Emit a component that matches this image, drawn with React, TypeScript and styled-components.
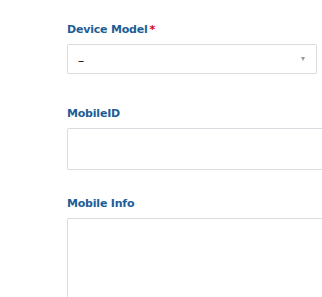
import React from "react";
import styled, { createGlobalStyle } from "styled-components";

const Global = createGlobalStyle`
  html, body { margin: 0; padding: 0; background: #fff; }
  body { font-family: "Open Sans", "DejaVu Sans", sans-serif; overflow: hidden; }
`;

const Form = styled.div`
  display: flex;
  flex-direction: column;
  padding: 21px 0 0 67px;
  width: 400px;
`;

const Field = styled.div<{ $gap: number }>`
  display: flex;
  flex-direction: column;
  margin-bottom: ${(p) => p.$gap}px;
`;

const Label = styled.label`
  font-family: "DejaVu Sans", sans-serif;
  font-weight: bold;
  font-size: 11px;
  line-height: 17px;
  color: #1d5d96;
  margin-bottom: 6px;
  letter-spacing: -0.2px;
`;

const Required = styled.span`
  color: #d0021b;
  margin-left: 2px;
`;

const Select = styled.div`
  box-sizing: border-box;
  width: 250px;
  height: 30px;
  border: 1px solid #d9dde2;
  border-radius: 2px;
  display: flex;
  align-items: center;
  justify-content: space-between;
  padding: 0 11px 0 10px;
  font-size: 12px;
  color: #222;
`;

const Value = styled.span`
  padding-top: 3px;
`;

const Arrow = styled.span`
  width: 0;
  height: 0;
  border-left: 2.5px solid transparent;
  border-right: 2.5px solid transparent;
  border-top: 4px solid #999;
`;

const Input = styled.div<{ $h: number }>`
  box-sizing: border-box;
  width: 290px;
  height: ${(p) => p.$h}px;
  border: 1px solid #d9dde2;
  border-radius: 2px;
`;

export default function App() {
  return (
    <>
      <Global />
      <Form>
        <Field $gap={31}>
          <Label>
            Device Model<Required>*</Required>
          </Label>
          <Select>
            <Value>–</Value>
            <Arrow />
          </Select>
        </Field>
        <Field $gap={25}>
          <Label>MobileID</Label>
          <Input $h={42} />
        </Field>
        <Field $gap={0}>
          <Label>Mobile Info</Label>
          <Input $h={120} />
        </Field>
      </Form>
    </>
  );
}
